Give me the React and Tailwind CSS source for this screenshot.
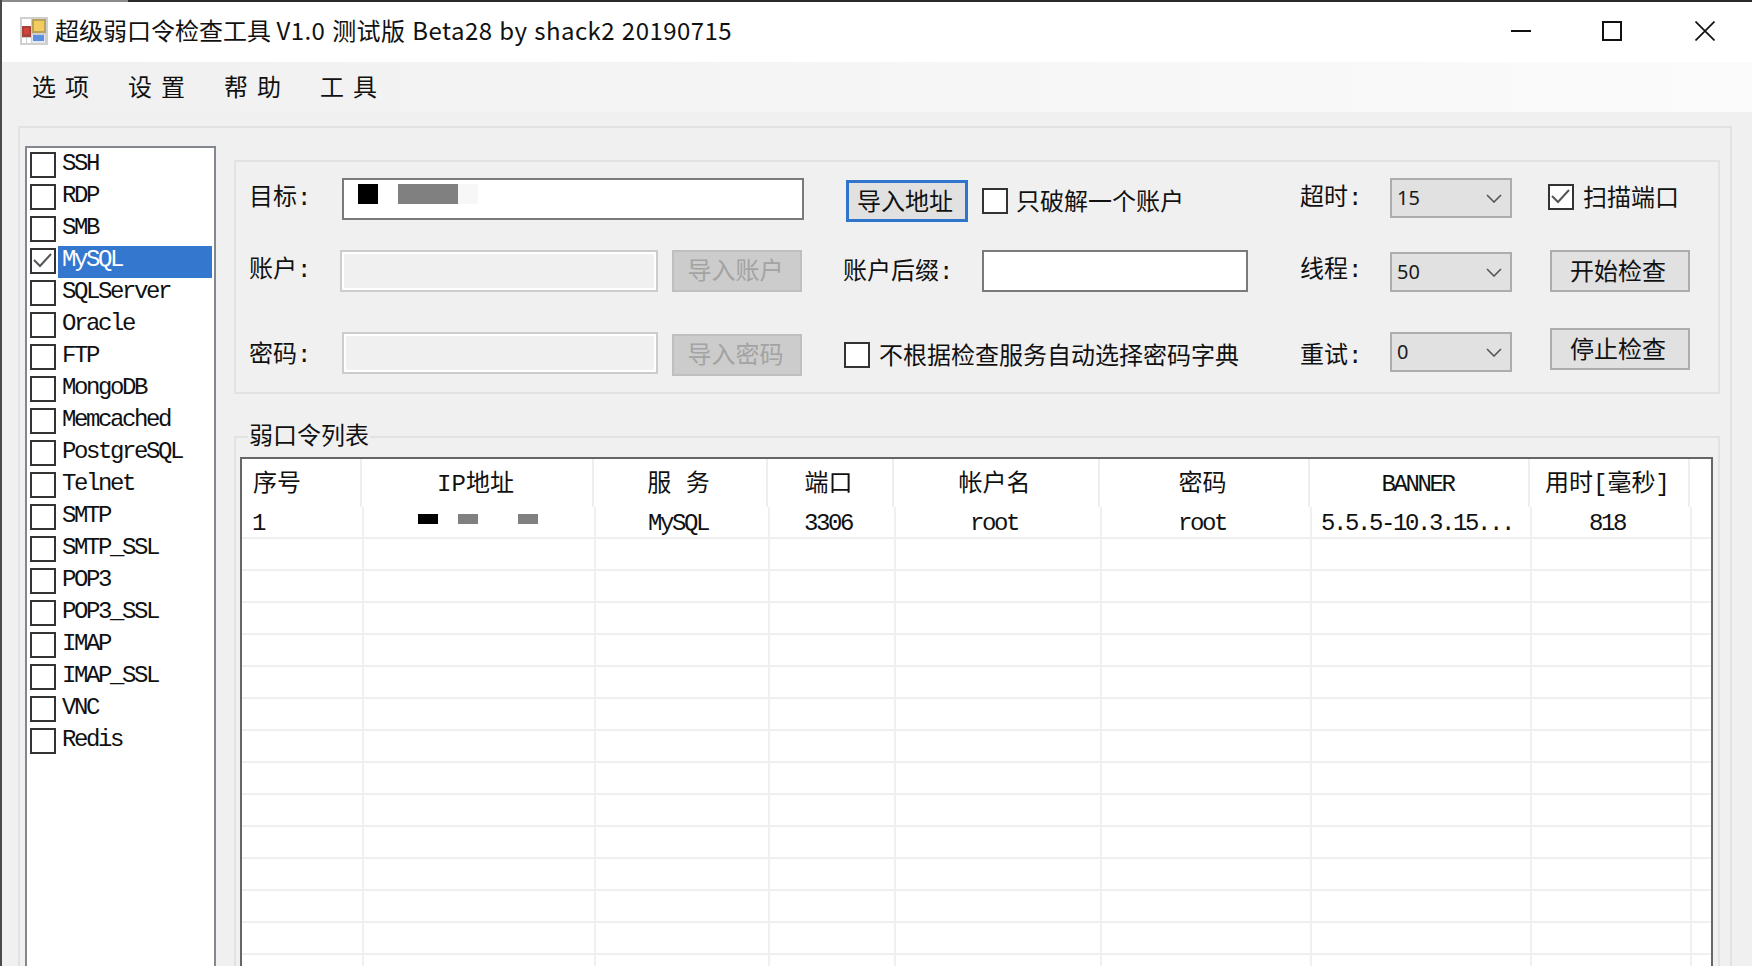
import React from 'react';

const SERVICES = ['SSH', 'RDP', 'SMB', 'MySQL', 'SQLServer', 'Oracle', 'FTP', 'MongoDB', 'Memcached', 'PostgreSQL', 'Telnet', 'SMTP', 'SMTP_SSL', 'POP3', 'POP3_SSL', 'IMAP', 'IMAP_SSL', 'VNC', 'Redis'];
const MENUS = [['选', '项'], ['设', '置'], ['帮', '助'], ['工', '具']];

const CJK = "font-['Noto_Sans_CJK_SC','Noto_Sans',sans-serif] text-[24px] leading-none text-[#111]";
const LABEL = "font-['Liberation_Mono','Noto_Sans_CJK_SC',monospace] text-[24px] leading-none text-[#111]";
const LATIN = "font-['Liberation_Mono',monospace] text-[24px] leading-none tracking-[-2.4px] text-[#111]";

function CheckBox({ checked, className = '' }) {
  return (
    <span className={`block w-[26px] h-[26px] shrink-0 border-2 border-[#333] bg-white ${className}`}>
      {checked && (
        <svg viewBox="0 0 22 22" className="w-[22px] h-[22px]">
          <polyline points="2,10 8,16 19,4" fill="none" stroke="#555" strokeWidth="2" />
        </svg>
      )}
    </span>
  );
}

function FieldLabel({ children, className = '' }) {
  return <span className={`flex items-center h-[36px] shrink-0 ${LABEL} ${className}`}>{children}</span>;
}

function TextBox({ className = '', children }) {
  return <div className={`h-[42px] shrink-0 border-2 border-[#7a7a7a] bg-white ${className}`}>{children}</div>;
}

function DisabledBox({ className = '' }) {
  return (
    <div className={`h-[42px] shrink-0 border-2 border-[#cccccc] ${className}`}>
      <div className="h-full border-2 border-white bg-[#f0f0f0]" />
    </div>
  );
}

function Button({ children, disabled, focused, className = '' }) {
  let look = 'border-2 border-[#adadad] bg-[#e1e1e1] pr-[4px] pb-[3px]';
  if (disabled) look = 'border-2 border-[#bfbfbf] bg-[#cccccc] pr-[3px] pb-[4px]';
  if (focused) look = 'border-[3px] border-[#2f75cb] bg-[#e1e1e1] pr-[4px] pb-[3px]';
  return (
    <button className={`flex items-center justify-center h-[42px] shrink-0 ${CJK} ${look} ${className}`}>
      <span className={disabled ? 'text-[#a3a3a3]' : ''}>{children}</span>
    </button>
  );
}

function Select({ value, className = '' }) {
  return (
    <div className={`flex items-center justify-between w-[122px] h-[40px] shrink-0 border-2 border-[#adadad] bg-[#e1e1e1] pl-[5px] pr-[8px] ${className}`}>
      <span className="font-['Noto_Sans',sans-serif] text-[20px] leading-none text-[#1a1a1a]">{value}</span>
      <svg width="16" height="9" viewBox="0 0 16 9" className="mt-[1px]">
        <polyline points="1,1 8,8 15,1" fill="none" stroke="#555" strokeWidth="1.6" />
      </svg>
    </div>
  );
}

function AppIcon() {
  return (
    <svg width="28" height="28" viewBox="0 0 28 28" className="shrink-0">
      <rect x="0" y="0" width="28" height="28" fill="#cfcfcf" />
      <rect x="2" y="2" width="9" height="7" fill="#ffffff" />
      <rect x="2" y="9" width="9" height="11" fill="#a8403c" />
      <rect x="4" y="11" width="5" height="6" fill="#d0443c" />
      <rect x="2" y="21" width="4" height="5" fill="#ffffff" />
      <rect x="7" y="21" width="4" height="5" fill="#ffffff" />
      <rect x="12" y="2" width="14" height="14" fill="#b9a25a" />
      <rect x="14" y="4" width="10" height="10" fill="#f3cb5e" />
      <rect x="12" y="18" width="13" height="8" fill="#e4e8f2" />
      <rect x="13" y="18" width="11" height="6" fill="#5f8fe0" />
    </svg>
  );
}

function TitleBar() {
  return (
    <div className="flex items-center h-[60px] bg-white pl-[18px] pr-[37px] pb-[2px]">
      <AppIcon />
      <span className={`ml-[7px] pb-[2px] ${CJK}`}>
        超级弱口令检查工具 <span className="tracking-[0.45px] [word-spacing:1px]">V1.0 测试版 Beta28 by shack2 20190715</span>
      </span>
      <div className="flex items-center ml-auto">
        <svg width="20" height="20" viewBox="0 0 20 20">
          <line x1="0" y1="10" x2="20" y2="10" stroke="#111" strokeWidth="2" />
        </svg>
        <svg width="20" height="20" viewBox="0 0 20 20" className="ml-[71px]">
          <rect x="1" y="1" width="18" height="18" fill="none" stroke="#111" strokeWidth="2" />
        </svg>
        <svg width="20" height="20" viewBox="0 0 20 20" className="ml-[73px]">
          <path d="M0.5 0.5 L19.5 19.5 M19.5 0.5 L0.5 19.5" fill="none" stroke="#111" strokeWidth="1.7" />
        </svg>
      </div>
    </div>
  );
}

function MenuBar() {
  return (
    <div className="flex items-center h-[50px] pl-[30px] pb-[2px] bg-linear-to-r from-[#f0f0f0] to-[#fbfbfb]">
      {MENUS.map(([a, b]) => (
        <div key={a} className={`flex w-[96px] gap-[9px] ${CJK}`}>
          <span>{a}</span>
          <span>{b}</span>
        </div>
      ))}
    </div>
  );
}

function ServiceList() {
  return (
    <div className="w-[191px] h-[900px] ml-[5px] mt-[18px] shrink-0 border-2 border-[#828790] bg-white pt-[2px] pl-[3px] pr-[2px]">
      {SERVICES.map((name) => {
        const active = name === 'MySQL';
        return (
          <div key={name} className="flex items-start h-[32px]">
            <CheckBox checked={active} className="mt-[2px]" />
            <span className={`flex items-center h-[32px] ml-[2px] flex-1 pl-[4px] pb-[4px] ${LATIN} ${active ? 'bg-[#3377cf] !text-white' : ''}`}>{name}</span>
          </div>
        );
      })}
    </div>
  );
}

function ScanPanel() {
  return (
    <div className="h-[234px] border-2 border-[#e2e2e2] pl-[13px] pt-[16px]">
      {/* first row */}
      <div className="flex items-start h-[44px]">
        <FieldLabel className="w-[93px] mt-[3px]">目标:</FieldLabel>
        <TextBox className="w-[462px] flex items-start pl-[14px] pt-[4px]">
          <span className="block w-[20px] h-[20px] bg-black" />
          <span className="block w-[60px] h-[20px] ml-[20px] bg-[#808080]" />
          <span className="block w-[20px] h-[20px] bg-[#f7f7f7]" />
        </TextBox>
        <Button focused className="w-[122px] ml-[42px] mt-[2px]">导入地址</Button>
        <CheckBox className="ml-[14px] mt-[10px]" />
        <span className={`w-[168px] ml-[8px] mt-[10px] ${CJK}`}>只破解一个账户</span>
        <FieldLabel className="w-[90px] ml-[116px] mt-[3px]">超时:</FieldLabel>
        <Select value="15" />
        <CheckBox checked className="ml-[36px] mt-[6px]" />
        <span className={`ml-[9px] mt-[6px] ${CJK}`}>扫描端口</span>
      </div>

      {/* second row */}
      <div className="flex items-start h-[42px] mt-[28px]">
        <FieldLabel className="w-[91px] mt-[3px]">账户:</FieldLabel>
        <DisabledBox className="w-[318px]" />
        <Button disabled className="w-[130px] ml-[14px]">导入账户</Button>
        <FieldLabel className="w-[139px] ml-[41px] mt-[5px]">账户后缀:</FieldLabel>
        <TextBox className="w-[266px]" />
        <FieldLabel className="w-[90px] ml-[52px] mt-[3px]">线程:</FieldLabel>
        <Select value="50" className="mt-[2px]" />
        <Button className="w-[140px] ml-[38px]">开始检查</Button>
      </div>

      {/* third row */}
      <div className="flex items-start h-[48px] mt-[36px]">
        <FieldLabel className="w-[93px] mt-[10px]">密码:</FieldLabel>
        <DisabledBox className="w-[316px] mt-[4px]" />
        <Button disabled className="w-[130px] ml-[14px] mt-[6px]">导入密码</Button>
        <CheckBox className="ml-[42px] mt-[14px]" />
        <span className={`w-[360px] ml-[9px] mt-[14px] ${CJK}`}>不根据检查服务自动选择密码字典</span>
        <FieldLabel className="w-[90px] ml-[61px] mt-[11px]">重试:</FieldLabel>
        <Select value="0" className="mt-[4px]" />
        <Button className="w-[140px] ml-[38px]">停止检查</Button>
      </div>
    </div>
  );
}

const HEAD_COLS = [120, 232, 174, 126, 206, 210, 220, 160];
const BODY_COLS = [122, 232, 174, 126, 206, 210, 220, 160];
const HEADERS = ['序号', 'IP地址', '服 务', '端口', '帐户名', '密码', 'BANNER', '用时[毫秒]'];
const ROW = ['1', null, 'MySQL', '3306', 'root', 'root', '5.5.5-10.3.15...', '818'];

function ResultTable() {
  return (
    <div className="flex-1 mt-[19px] ml-[4px] mr-[5px] border-2 border-b-0 border-[#666] bg-white overflow-hidden">
      <div className="flex h-[48px]">
        {HEADERS.map((title, i) => (
          <div
            key={title}
            style={{ width: HEAD_COLS[i] }}
            className={`flex items-center h-full shrink-0 border-r-2 border-[#eeeeee] pt-[3px] ${i === 0 ? 'pl-[11px]' : 'justify-center pr-[3px]'} ${LABEL}`}
          >
            {title === 'BANNER' ? <span className={LATIN}>{title}</span> : title}
          </div>
        ))}
      </div>
      <div className="flex h-[32px] border-b-2 border-[#f0f0f0]">
        {ROW.map((text, i) => (
          <div
            key={i}
            style={{ width: BODY_COLS[i] }}
            className={`flex items-center h-full shrink-0 border-r-2 border-[#f0f0f0] pt-[3px] ${i === 0 ? 'pl-[10px]' : i === 1 ? 'pl-[54px]' : 'justify-center pr-[8px]'} ${LATIN}`}
          >
            {text}
            {i === 1 && (
              <div className="flex mb-[9px]">
                <span className="block w-[20px] h-[10px] bg-black" />
                <span className="block w-[20px] h-[10px] ml-[20px] bg-[#808080]" />
                <span className="block w-[20px] h-[10px] ml-[40px] bg-[#808080]" />
              </div>
            )}
          </div>
        ))}
      </div>
      {Array.from({ length: 14 }).map((_, r) => (
        <div key={r} className="flex h-[32px] border-b-2 border-[#f0f0f0]">
          {BODY_COLS.map((w, i) => (
            <div key={i} style={{ width: w }} className="h-full shrink-0 border-r-2 border-[#f0f0f0]" />
          ))}
        </div>
      ))}
    </div>
  );
}

export default function App() {
  return (
    <div className="flex w-[1752px] h-[966px] overflow-hidden bg-[#3a3a3a]">
      <div className="w-[2px] shrink-0 bg-[#4a4a4a]" />
      <div className="flex flex-col flex-1 min-w-0">
        <div className="flex h-[2px] shrink-0 bg-[#2b2b2b]">
          <div className="w-[126px] bg-[#8a8a8a]" />
        </div>
        <TitleBar />
        <MenuBar />
        <div className="flex-1 min-h-0 bg-[#f0f0f0] pl-[16px] pt-[14px] overflow-hidden">
          <div className="flex items-start w-[1714px] h-[840px] border-2 border-b-0 border-[#e2e2e2]">
            <ServiceList />
            <div className="flex flex-col w-[1486px] h-full ml-[18px] mt-[32px]">
              <ScanPanel />
              <div className="relative flex flex-col flex-1 mt-[42px] border-2 border-b-0 border-[#e2e2e2]">
                <span className={`absolute -top-[16px] left-[12px] px-[1px] bg-[#f0f0f0] ${CJK}`}>弱口令列表</span>
                <ResultTable />
              </div>
            </div>
          </div>
        </div>
      </div>
    </div>
  );
}
